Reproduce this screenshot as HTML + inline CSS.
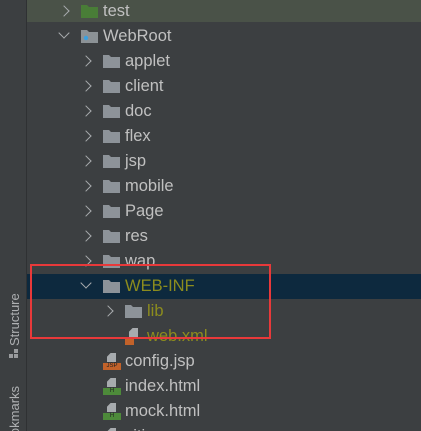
<!DOCTYPE html><html><head><style>
html,body{margin:0;width:421px;height:431px;overflow:hidden}
body{background:#3c3f41;font-family:"Liberation Sans",sans-serif}
#w{position:relative;width:421px;height:431px;overflow:hidden}
.side{position:absolute;left:0;top:0;width:26px;height:431px;background:#3c3f41;border-right:1px solid #2f3133}
.r{position:absolute;left:27px;right:0;height:25px}
.t{position:absolute;top:3px;font-size:16.5px;color:#c0c0c0;white-space:nowrap}
.ch{position:absolute;top:8px;width:7px;height:7px;border-right:1.6px solid #a8abae;border-bottom:1.6px solid #a8abae}
.rt{transform:rotate(-45deg)}
.dn{transform:rotate(45deg);top:5px}
.f{position:absolute;top:6px;width:17px;height:13px}
.vt{position:absolute;transform:rotate(-90deg);transform-origin:left top;color:#aeb0b2;font-size:13px;white-space:nowrap}
</style></head><body><div id="w">
<div class="side"></div>
<div class="vt" style="left:7px;top:346px">Structure</div>
<div style="position:absolute;left:9px;top:354px;width:4px;height:4px;background:#9a9c9e;box-shadow:5px 0 #9a9c9e,5px -5px #9a9c9e"></div>
<div class="vt" style="left:7px;top:451px">Bookmarks</div>
<div id="tree"></div>
<div style="position:absolute;left:30px;top:264px;width:237px;height:71px;border:2.5px solid #e8393a;pointer-events:none;z-index:5"></div>
</div>
<script>
var F='<svg class="f" style="left:X;" viewBox="0 0 17 13"><path d="M0 0h6l2 2h9v11H0z" fill="C"/>EXTRA</svg>';
var rows=[
[0,'test',1,'#497d37',0,'#4a5248'],
[0,'WebRoot',0,'#8c9296',1],
[1,'applet',1],[1,'client',1],[1,'doc',1],[1,'flex',1],[1,'jsp',1],[1,'mobile',1],[1,'Page',1],[1,'res',1],[1,'wap',1],
[1,'WEB-INF',0,null,0,'#0d293e','#8c8c1e'],
[2,'lib',1,null,0,null,'#8c8c1e'],
[2,'web.xml',-1,'xml',0,null,'#8c8c1e'],
[1,'config.jsp',-1,'jsp'],[1,'index.html',-1,'h'],[1,'mock.html',-1,'h'],[1,'citi',-1,'h']
];
var h='';
rows.forEach(function(r,i){
 var d=r[0],x=39+22*d,top=i*25-1;
 var bg=r[5]?'background:'+r[5]+';':'';
 if(i==0)bg+='margin-top:-3px;height:26px;';
 h+='<div class="r" style="top:'+top+'px;'+bg+'">';
 var o=i==0?3:0;
 if(r[2]==1)h+='<div class="ch rt" style="left:'+(x-6)+'px;margin-top:'+o+'px"></div>';
 if(r[2]==0)h+='<div class="ch dn" style="left:'+(x-6)+'px"></div>';
 var ix=x+15;
 if(r[3]=='jsp'||r[3]=='h'||r[3]=='xml'){
  var c=r[3]=='h'?'#4d8a3a':'#c2622a';
  h+='<div style="position:absolute;left:'+(ix+4)+'px;top:4px;width:9px;height:9px;background:#a7abae;clip-path:polygon(40% 0,100% 0,100% 100%,0 100%,0 40%)"></div>';
  h+='<div style="position:absolute;left:'+ix+'px;top:14px;width:'+(r[3]=='xml'?9:18)+'px;height:7px;background:'+c+';font-size:6px;line-height:7px;color:#222;text-align:center">'+(r[3]=='jsp'?'JSP':r[3]=='h'?'H':'')+'</div>';
 } else {
  var extra=r[1]=='WebRoot'?'<circle cx="5" cy="8" r="2.2" fill="#3aa0e0"/>':'';
  h+=F.replace('X',ix+'px').replace('C',r[3]||'#8d9399').replace('EXTRA',extra).replace('class="f" style="','class="f" style="margin-top:'+o+'px;');
 }
 h+='<div class="t" style="left:'+(ix+22)+'px;margin-top:'+o+'px;color:'+(r[6]||'#c0c0c0')+'">'+r[1]+'</div></div>';
});
document.getElementById('tree').innerHTML=h;
</script>
</body></html>
